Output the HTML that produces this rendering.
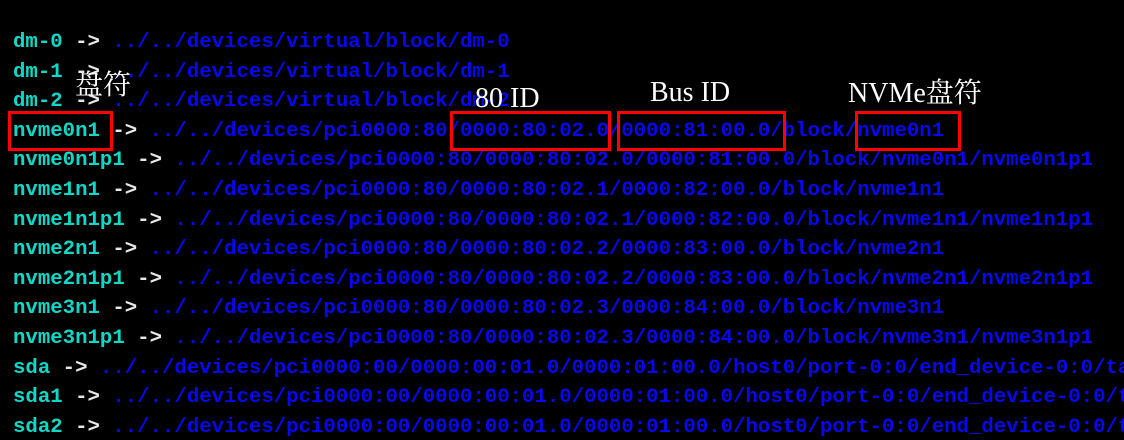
<!DOCTYPE html>
<html><head><meta charset="utf-8"><style>
html,body{margin:0;padding:0;background:#000;width:1124px;height:440px;overflow:hidden;position:relative}
.t{position:absolute;left:13px;top:28px;font-family:"Liberation Mono",monospace;font-weight:bold;font-size:20.7px;line-height:29.6px;white-space:pre;color:#0808f0}
.c{color:#10d8c8}.a{color:#e8e8e8}
.box{position:absolute;border:3px solid #f00;box-sizing:border-box}
.lab{position:absolute;font-family:"Liberation Serif","Noto Serif CJK SC",serif;font-size:28px;color:#fff;white-space:nowrap;line-height:1}
</style></head><body>
<div class="t"><span class="c">dm-0</span> <span class="a">-&gt;</span> ../../devices/virtual/block/dm-0
<span class="c">dm-1</span> <span class="a">-&gt;</span> ../../devices/virtual/block/dm-1
<span class="c">dm-2</span> <span class="a">-&gt;</span> ../../devices/virtual/block/dm-2
<span class="c">nvme0n1</span> <span class="a">-&gt;</span> ../../devices/pci0000:80/0000:80:02.0/0000:81:00.0/block/nvme0n1
<span class="c">nvme0n1p1</span> <span class="a">-&gt;</span> ../../devices/pci0000:80/0000:80:02.0/0000:81:00.0/block/nvme0n1/nvme0n1p1
<span class="c">nvme1n1</span> <span class="a">-&gt;</span> ../../devices/pci0000:80/0000:80:02.1/0000:82:00.0/block/nvme1n1
<span class="c">nvme1n1p1</span> <span class="a">-&gt;</span> ../../devices/pci0000:80/0000:80:02.1/0000:82:00.0/block/nvme1n1/nvme1n1p1
<span class="c">nvme2n1</span> <span class="a">-&gt;</span> ../../devices/pci0000:80/0000:80:02.2/0000:83:00.0/block/nvme2n1
<span class="c">nvme2n1p1</span> <span class="a">-&gt;</span> ../../devices/pci0000:80/0000:80:02.2/0000:83:00.0/block/nvme2n1/nvme2n1p1
<span class="c">nvme3n1</span> <span class="a">-&gt;</span> ../../devices/pci0000:80/0000:80:02.3/0000:84:00.0/block/nvme3n1
<span class="c">nvme3n1p1</span> <span class="a">-&gt;</span> ../../devices/pci0000:80/0000:80:02.3/0000:84:00.0/block/nvme3n1/nvme3n1p1
<span class="c">sda</span> <span class="a">-&gt;</span> ../../devices/pci0000:00/0000:00:01.0/0000:01:00.0/host0/port-0:0/end_device-0:0/target
<span class="c">sda1</span> <span class="a">-&gt;</span> ../../devices/pci0000:00/0000:00:01.0/0000:01:00.0/host0/port-0:0/end_device-0:0/t
<span class="c">sda2</span> <span class="a">-&gt;</span> ../../devices/pci0000:00/0000:00:01.0/0000:01:00.0/host0/port-0:0/end_device-0:0/t</div>
<div class="box" style="left:8px;top:111px;width:105px;height:40px"></div>
<div class="box" style="left:450px;top:111px;width:161px;height:40px"></div>
<div class="box" style="left:617px;top:111px;width:169px;height:40px"></div>
<div class="box" style="left:855px;top:111px;width:106px;height:40px"></div>
<div class="lab" style="left:75px;top:72px">盘符</div>
<div class="lab" style="left:475px;top:85px">80 ID</div>
<div class="lab" style="left:650px;top:79px">Bus ID</div>
<div class="lab" style="left:848px;top:80px">NVMe盘符</div>
</body></html>
